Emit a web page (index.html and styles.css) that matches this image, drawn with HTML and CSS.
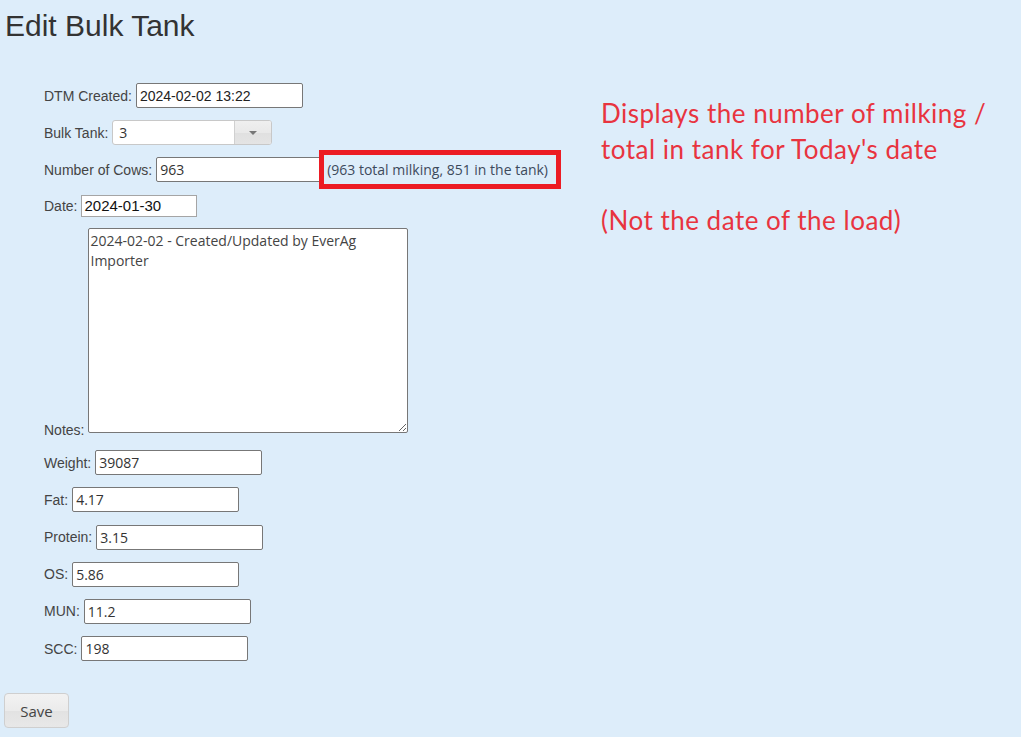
FILE: index.html
```html
<!DOCTYPE html>
<html lang="en">
<head>
<meta charset="utf-8">
<title>Edit Bulk Tank</title>
<link rel="stylesheet" href="styles.css">
</head>
<body>
<h1 class="title">Edit Bulk Tank</h1>
<div class="layout">
  <form class="form">
    <div class="row">
      <label class="lbl">DTM Created:</label>
      <input class="field field-arial" type="text" value="2024-02-02 13:22">
    </div>
    <div class="row">
      <label class="lbl">Bulk Tank:</label>
      <span class="combo">
        <span class="combo-value">3</span>
        <span class="combo-btn"><span class="caret"></span></span>
      </span>
    </div>
    <div class="row">
      <label class="lbl">Number of Cows:</label>
      <input class="field" type="text" value="963">
      <span class="hint">(963 total milking, 851 in the tank)</span>
    </div>
    <div class="row row-date">
      <label class="lbl">Date:</label>
      <input class="field field-date" type="text" value="2024-01-30">
    </div>
    <div class="row row-notes">
      <label class="lbl lbl-notes">Notes:</label>
      <textarea class="notes">2024-02-02 - Created/Updated by EverAg Importer</textarea>
    </div>
    <div class="row">
      <label class="lbl">Weight:</label>
      <input class="field" type="text" value="39087">
    </div>
    <div class="row">
      <label class="lbl">Fat:</label>
      <input class="field" type="text" value="4.17">
    </div>
    <div class="row">
      <label class="lbl">Protein:</label>
      <input class="field" type="text" value="3.15">
    </div>
    <div class="row">
      <label class="lbl">OS:</label>
      <input class="field" type="text" value="5.86">
    </div>
    <div class="row">
      <label class="lbl">MUN:</label>
      <input class="field" type="text" value="11.2">
    </div>
    <div class="row">
      <label class="lbl">SCC:</label>
      <input class="field" type="text" value="198">
    </div>
  </form>
  <div class="note">
    <p class="note-line">Displays the number of milking /<br>total in tank for Today's date</p>
    <p class="note-line note-gap">(Not the date of the load)</p>
  </div>
</div>
<button class="save" type="button">Save</button>
</body>
</html>
```

FILE: styles.css
```css
html, body {
  margin: 0;
  background: #ddedfa;
}
body {
  padding: 0 4px;
  font-family: "Liberation Sans", Arial, sans-serif;
  color: #333;
}
.title {
  margin: 9px 0 0 1px;
  font-size: 30px;
  line-height: 34px;
  font-weight: normal;
  color: #333;
}
.layout {
  display: flex;
  margin-top: 40px;
}
.form {
  width: 557px;
  padding-left: 40px;
  flex-shrink: 0;
}
.row {
  display: flex;
  align-items: center;
  margin-bottom: 12.2px;
  font-size: 14px;
  color: #444;
}
.lbl {
  margin-right: 4px;
  white-space: nowrap;
}
.field {
  box-sizing: border-box;
  width: 167px;
  height: 25px;
  margin: 0;
  padding: 0 3px;
  border: 1px solid #777;
  border-radius: 2px;
  background: #fff;
  font-family: "Open Sans", sans-serif;
  font-size: 14px;
  color: #333;
  outline: none;
}
.field-arial {
  font-family: "Liberation Sans", Arial, sans-serif;
  font-size: 14px;
  color: #222;
}
.row-date {
  margin-bottom: 11px;
}
.field-date {
  width: 116px;
  height: 22px;
  padding: 0 2px;
  border-color: #a5a5a5;
  border-radius: 0;
  font-family: "Liberation Sans", Arial, sans-serif;
  font-size: 15px;
  color: #111;
}
.combo {
  display: inline-flex;
  width: 160px;
  height: 25px;
  box-sizing: border-box;
  border: 1px solid #c8c8c8;
  border-radius: 3px;
  overflow: hidden;
  background: #fff;
}
.combo-value {
  flex: 1;
  padding-left: 6px;
  font-family: "Open Sans", sans-serif;
  font-size: 14px;
  line-height: 23px;
  color: #333;
}
.combo-btn {
  width: 36px;
  display: flex;
  align-items: center;
  justify-content: center;
  border-left: 1px solid #d0d0d0;
  background: linear-gradient(#efefef, #e9e9e9 50%, #e0e0e0 51%, #e4e4e4);
}
.caret {
  width: 0;
  height: 0;
  border-left: 4px solid transparent;
  border-right: 4px solid transparent;
  border-top: 4px solid #777;
}
.hint {
  display: inline-flex;
  align-items: center;
  box-sizing: border-box;
  height: 39px;
  margin: -7px 0 -7px -4px;
  padding: 0 8px 0 3px;
  border: 5px solid #ec1c24;
  font-family: "Open Sans", sans-serif;
  font-size: 14px;
  color: #3d4a5c;
  white-space: nowrap;
}
.row-notes {
  align-items: flex-end;
  margin-bottom: 17.6px;
}
.lbl-notes {
  line-height: 16px;
  margin-bottom: -5px;
}
.notes {
  box-sizing: border-box;
  width: 320px;
  height: 205px;
  margin: 0;
  padding: 2px 1px;
  border: 1px solid #777;
  border-radius: 2px;
  background: #fff;
  font-family: "Open Sans", sans-serif;
  font-size: 14px;
  line-height: 20px;
  color: #444;
  resize: both;
  outline: none;
}
.note {
  margin-top: 13px;
  font-family: Lato, "Open Sans", sans-serif;
  font-size: 26px;
  letter-spacing: 0.5px;
  line-height: 35.5px;
  color: #e8343f;
}
.note-line {
  margin: 0;
  white-space: nowrap;
}
.note-gap {
  margin-top: 35.5px;
}
.save {
  display: block;
  box-sizing: border-box;
  width: 65px;
  height: 35px;
  margin: 20px 0 0;
  padding: 0;
  border: 1px solid #cfcfcf;
  border-radius: 4px;
  background: linear-gradient(#f2f2f2, #ebebeb 50%, #e2e2e2 51%, #e8e8e8);
  font-family: "Open Sans", sans-serif;
  font-size: 15px;
  color: #444;
}
```
